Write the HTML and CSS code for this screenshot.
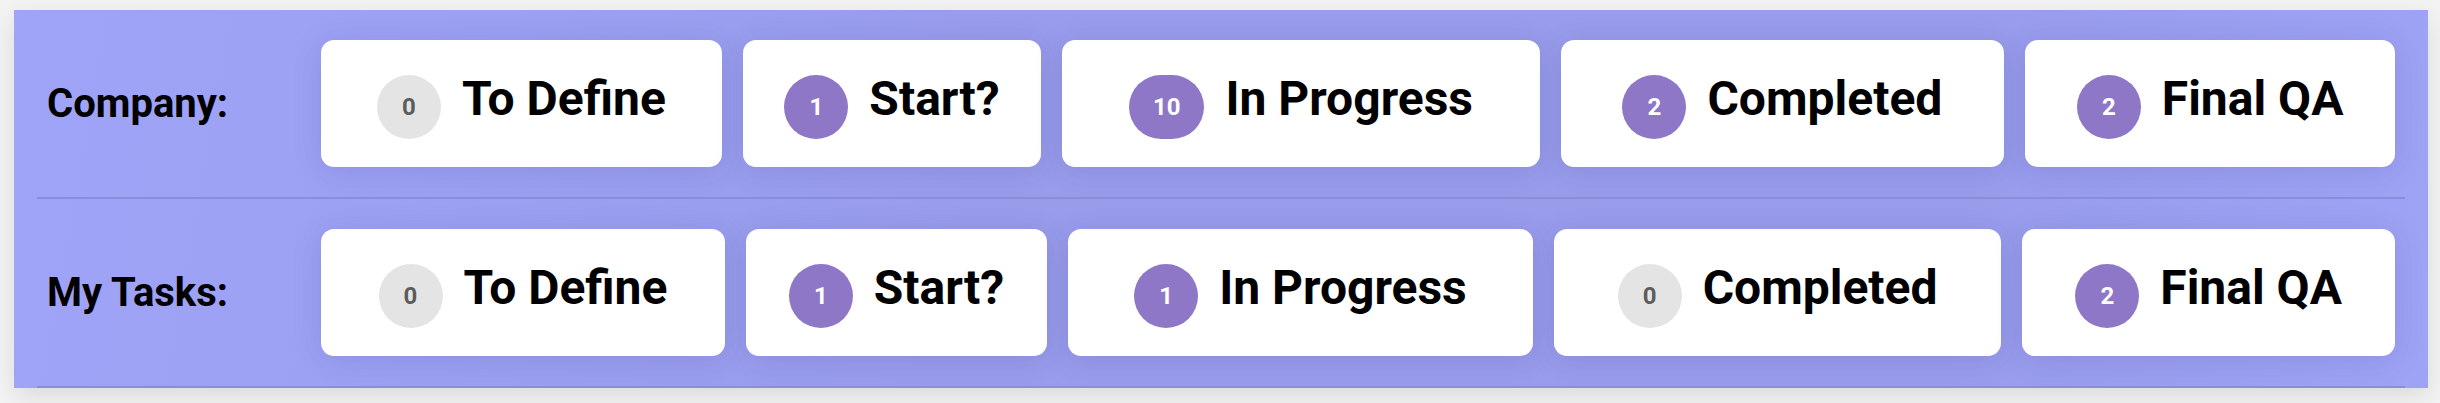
FILE: index.html
```html
<!DOCTYPE html>
<html lang="en">
<head>
  <meta charset="UTF-8" />
  <title>Task status</title>
  <link rel="stylesheet" href="styles.css">
</head>
<body>

<div class="panel">
  <div class="row">
    <div class="label">Company:</div>
    <div class="cards-wrap">
      <div class="cards">
        <div class="card"><div class="card-body"><span class="badge empty">0</span><span class="name">To Define</span></div></div>
        <div class="card"><div class="card-body"><span class="badge">1</span><span class="name">Start?</span></div></div>
        <div class="card"><div class="card-body"><span class="badge">10</span><span class="name">In Progress</span></div></div>
        <div class="card"><div class="card-body"><span class="badge">2</span><span class="name">Completed</span></div></div>
        <div class="card"><div class="card-body"><span class="badge">2</span><span class="name">Final QA</span></div></div>
      </div>
    </div>
  </div>

  <div class="row">
    <div class="label">My Tasks:</div>
    <div class="cards-wrap">
      <div class="cards">
        <div class="card"><div class="card-body"><span class="badge empty">0</span><span class="name">To Define</span></div></div>
        <div class="card"><div class="card-body"><span class="badge">1</span><span class="name">Start?</span></div></div>
        <div class="card"><div class="card-body"><span class="badge">1</span><span class="name">In Progress</span></div></div>
        <div class="card"><div class="card-body"><span class="badge empty">0</span><span class="name">Completed</span></div></div>
        <div class="card"><div class="card-body"><span class="badge">2</span><span class="name">Final QA</span></div></div>
      </div>
    </div>
  </div>
</div>

</body>
</html>
```

FILE: styles.css
```css
body {
  margin: 0;
  padding: 10px 12px 20px 14px;
  font-family: Roboto, 'Liberation Sans', sans-serif;
  background: #f3f3f3;
  color: #000;
}
.panel {
  background: linear-gradient(100deg, #a0a4f8 0%, #989ceb 40%, #989ceb 80%, #9fa3f5 100%);
  padding: 0 23px;
  box-shadow: 0 8px 24px rgba(0,0,0,0.1);
}
.row {
  display: flex;
  align-items: center;
  padding: 30px 10px;
  border-bottom: 2px solid #8a8ed8;
}
.label {
  flex: 0 0 274px;
  font-size: 40px;
  font-weight: 700;
}
.cards-wrap {
  flex: 1;
  min-width: 0;
}
.cards {
  display: table;
  width: calc(100% + 42px);
  margin: 0 -21px;
  border-spacing: 21px 0;
}
.card {
  display: table-cell;
  background: white;
  border-radius: 13px;
  padding: 30px 0 28px;
  text-align: center;
  white-space: nowrap;
  box-shadow: 0 4px 30px rgba(40,40,120,0.14);
}
.card-body {
  display: inline-flex;
  align-items: baseline;
}
.badge {
  display: inline-flex;
  align-items: center;
  justify-content: center;
  box-sizing: border-box;
  min-width: 64px;
  height: 64px;
  padding: 0 24px;
  border-radius: 32px;
  background: #8f77c7;
  color: white;
  font-size: 24px;
  font-weight: 700;
  margin-right: 21px;
}
.badge.empty {
  background: #e4e4e4;
  color: #5c5c5c;
}
.name {
  font-size: 48px;
  font-weight: 700;
}
```
